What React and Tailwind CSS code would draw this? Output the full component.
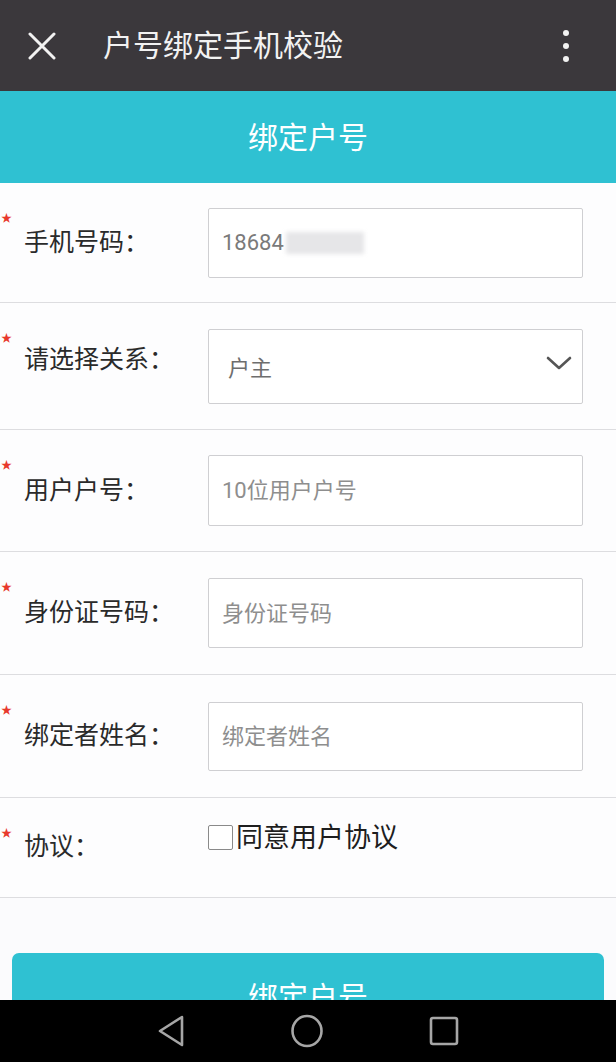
import React from 'react';

const font = { fontFamily: "Roboto, 'Noto Sans CJK SC', sans-serif" };

// form rows: label, kind, value/placeholder, row height, box height
const rows = [
  { label: '手机号码：', kind: 'value', text: '18684', h: 'h-[120px]', box: 'h-[70px]' },
  { label: '请选择关系：', kind: 'select', text: '户主', h: 'h-[127px]', box: 'h-[75px]', labelShift: '-mt-[12px]' },
  { label: '用户户号：', kind: 'placeholder', text: '10位用户户号', h: 'h-[122px]', box: 'h-[71px]' },
  { label: '身份证号码：', kind: 'placeholder', text: '身份证号码', h: 'h-[123px]', box: 'h-[70px]' },
  { label: '绑定者姓名：', kind: 'placeholder', text: '绑定者姓名', h: 'h-[123px]', box: 'h-[69px]' },
];

const Star = () => (
  <div className="w-[24px] self-start pt-[30px] text-[11px] leading-none text-[#e8392c] pl-[1px]">★</div>
);

const App = () => {
  return (
    <div className="w-[616px] h-[1062px] flex flex-col overflow-hidden bg-[#fbfbfd]" style={font}>
      {/* title bar */}
      <div className="h-[91px] flex-none bg-[#3b383c] flex items-center">
        <svg className="ml-[28px]" width="28" height="28" viewBox="0 0 28 28" fill="none" stroke="#f2f2f2" strokeWidth="3" strokeLinecap="round">
          <path d="M2 2l24 24M26 2L2 26" />
        </svg>
        <div className="ml-[47px] text-[30px] text-[#f2f2f2] leading-none">户号绑定手机校验</div>
        <div className="ml-auto mr-[47px] flex flex-col gap-[7px]">
          <span className="w-[6px] h-[6px] rounded-full bg-[#f2f2f2]" />
          <span className="w-[6px] h-[6px] rounded-full bg-[#f2f2f2]" />
          <span className="w-[6px] h-[6px] rounded-full bg-[#f2f2f2]" />
        </div>
      </div>

      {/* section header */}
      <div className="h-[92px] flex-none bg-[#2fc1d2] flex items-center justify-center text-white text-[30px]">
        绑定户号
      </div>

      <div className="flex-1 overflow-hidden">
        {rows.map((r) => (
          <div key={r.label} className={`${r.h} flex items-center border-b border-[#dddde0] bg-[#fdfdfe]`}>
            <Star />
            <div className={`w-[184px] text-[25px] text-[#2a2a2a] ${r.labelShift || ''}`}>{r.label}</div>
            <div className={`w-[375px] ${r.box} border border-[#cfcfd2] rounded-[2px] bg-white flex items-center px-[13px]`}>
              {r.kind === 'value' && (
                <div className="flex items-center">
                  <span className="text-[22px] text-[#7a7a7a]">{r.text}</span>
                  <span className="ml-[2px] w-[78px] h-[22px] bg-[#e6e6e8] blur-[2px]" />
                </div>
              )}
              {r.kind === 'placeholder' && (
                <span className="text-[22px] text-[#8e8e8e]">{r.text}</span>
              )}
              {r.kind === 'select' && (
                <>
                  <span className="text-[22px] text-[#6e6e6e] pl-[6px] pt-[4px]">{r.text}</span>
                  <svg className="ml-auto mr-[-3px] -mt-[6px]" width="26" height="16" viewBox="0 0 26 16" fill="none" stroke="#555" strokeWidth="2.6" strokeLinecap="round" strokeLinejoin="round">
                    <path d="M2 3l11 10 11-10" />
                  </svg>
                </>
              )}
            </div>
          </div>
        ))}

        {/* agreement row */}
        <div className="h-[100px] flex border-b border-[#dddde0] bg-[#fdfdfe]">
          <Star />
          <div className="w-[184px] pt-[36px] text-[25px] text-[#2a2a2a] leading-none">协议：</div>
          <label className="flex items-start pt-[27px]">
            <span className="w-[25px] h-[25px] border border-[#8a8a8a] rounded-[2px] bg-white" />
            <span className="ml-[3px] -mt-[2px] text-[27px] text-[#1e1e1e] leading-none pt-[2px]">同意用户协议</span>
          </label>
        </div>

        <div className="pt-[55px] px-[12px]">
          <button className="w-full h-[88px] rounded-[7px] bg-[#2fc1d2] text-white text-[30px]">绑定户号</button>
        </div>
      </div>

      {/* android nav bar */}
      <div className="h-[62px] flex-none bg-black flex items-center">
        <svg className="ml-[157px]" width="28" height="32" viewBox="0 0 28 32" fill="none" stroke="#a6a6a6" strokeWidth="2.6" strokeLinejoin="round">
          <path d="M25 2L3 16l22 14z" />
        </svg>
        <svg className="ml-[105px]" width="34" height="34" viewBox="0 0 34 34" fill="none" stroke="#a6a6a6" strokeWidth="2.6">
          <ellipse cx="17" cy="17" rx="14.5" ry="15" />
        </svg>
        <svg className="ml-[105px]" width="30" height="30" viewBox="0 0 30 30" fill="none" stroke="#a6a6a6" strokeWidth="2.6">
          <rect x="2" y="2" width="26" height="26" rx="2" />
        </svg>
      </div>
    </div>
  );
};

export default App;
